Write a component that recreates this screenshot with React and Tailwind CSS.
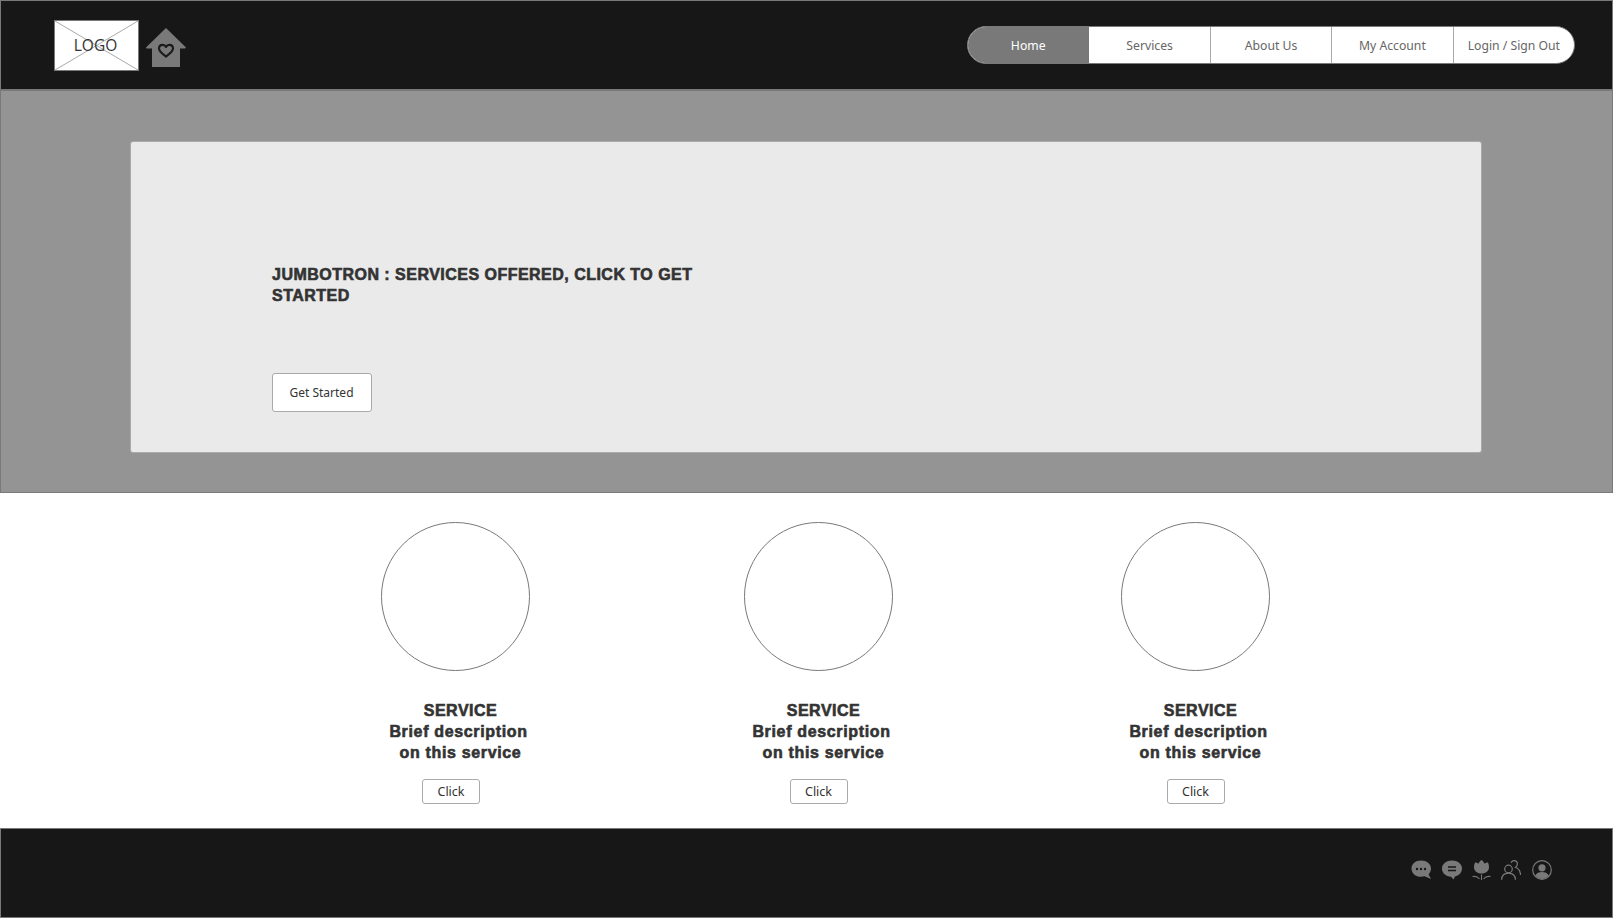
const NAV = ['Home', 'Services', 'About Us', 'My Account', 'Login / Sign Out']

const SERVICES = [
  { offset: 'ml-[381px]', btn: 'mr-[9px]' },
  { offset: 'ml-[214px]', btn: 'mr-0' },
  { offset: 'ml-[228px]', btn: 'mr-0' },
]

function HouseIcon() {
  return (
    <svg width="42" height="41" viewBox="0 0 42 41" className="ml-[6px] mt-[7px]">
      <path d="M21 1 L41 20.5 L40 21.5 L35 21.5 L35 40 L7 40 L7 21.5 L1.5 21.5 L1 20.5 Z" fill="#797979" />
      <path d="M21 29.5 C17 26.5 14 24.5 14 21.5 C14 19 15.8 17.8 17.6 17.8 C19 17.8 20.2 18.5 21 19.8 C21.8 18.5 23 17.8 24.4 17.8 C26.2 17.8 28 19 28 21.5 C28 24.5 25 26.5 21 29.5 Z" fill="none" stroke="#1b1b1b" strokeWidth="2.2" strokeLinejoin="round" />
    </svg>
  )
}

function Logo() {
  return (
    <div className="relative w-[85px] h-[51px] bg-white border border-[#797979] flex items-center justify-center">
      <svg className="absolute inset-0 w-full h-full" viewBox="0 0 83 49" preserveAspectRatio="none">
        <path d="M0 0 L83 49 M83 0 L0 49" stroke="#aaaaaa" strokeWidth="1" />
      </svg>
      <span className="relative text-[15.5px] text-[#333333] font-['Open_Sans',sans-serif] mr-[2px]">LOGO</span>
    </div>
  )
}

function Header() {
  return (
    <header className="h-[91px] bg-[#171717] border border-[#797979] border-b-2 flex items-start justify-between pl-[53px] pr-[37px]">
      <div className="flex items-start pt-[19px]">
        <Logo />
        <HouseIcon />
      </div>
      <nav className="mt-[25px] flex h-[38px] w-[608px] rounded-[19px] overflow-hidden border border-[#797979] bg-white font-['Noto_Sans',sans-serif] text-[12.2px]">
        {NAV.map((item, i) => (
          <div
            key={item}
            className={
              i === 0
                ? 'flex-1 flex items-center justify-center pt-[2px] bg-[#797979] text-white border-r border-[#797979]'
                : 'flex-1 flex items-center justify-center pt-[2px] text-[#666666] whitespace-nowrap border-r border-[#aaaaaa] last:border-r-0'
            }
          >
            {item}
          </div>
        ))}
      </nav>
    </header>
  )
}

function Hero() {
  return (
    <section className="h-[402px] bg-[#949494] border border-[#797979] border-t-0 pl-[129px] pr-[130px] pt-[50px]">
      <div className="h-[312px] bg-[#eaeaea] border border-[#aaaaaa] rounded-[3px] pl-[141px] pt-[122px]">
        <h1 className="w-[450px] text-[16px] leading-[21px] font-bold text-[#333333] tracking-[0.48px] font-['Liberation_Sans',sans-serif] [-webkit-text-stroke:0.6px_#333333]">
          JUMBOTRON : SERVICES OFFERED, CLICK TO GET STARTED
        </h1>
        <button className="mt-[67px] -ml-[0.5px] w-[100px] h-[39px] bg-white border border-[#aaaaaa] rounded-[3px] text-[12px] text-[#333333] font-['Noto_Sans',sans-serif]">
          Get Started
        </button>
      </div>
    </section>
  )
}

function Service({ offset, btn }) {
  return (
    <div className={`${offset} w-[149px] flex flex-col items-center shrink-0`}>
      <div className="w-[149px] h-[149px] rounded-full border border-[#797979] bg-white shrink-0" />
      <p className="mt-[29px] ml-[10px] whitespace-nowrap text-center text-[16px] leading-[21px] font-bold text-[#333333] tracking-[0.65px] font-['Liberation_Sans',sans-serif] [-webkit-text-stroke:0.6px_#333333]">
        <span className="tracking-[0.5px]">SERVICE</span>
        <br />
        <span className="mr-[4px]">Brief description</span>
        <br />
        on this service
      </p>
      <button className={`mt-[16px] ${btn} w-[58px] h-[25px] pt-[1px] bg-white border border-[#aaaaaa] rounded-[3px] text-[12.5px] text-[#333333] font-['Noto_Sans',sans-serif]`}>
        Click
      </button>
    </div>
  )
}

function Services() {
  return (
    <section className="h-[335px] bg-white pt-[29px] flex items-start">
      {SERVICES.map((s, i) => (
        <Service key={i} offset={s.offset} btn={s.btn} />
      ))}
    </section>
  )
}

function FooterIcons() {
  const color = '#797979'
  return (
    <div className="flex items-center gap-[10px] mt-[31px] h-[20px]">
      <svg width="21" height="20" viewBox="0 0 21 20">
        <path d="M10 0.5 C15.5 0.5 20 3.8 20 8.5 C20 11 19 13 17.5 14.2 L20 19 L13.5 16.3 C12.5 16.6 11.2 16.8 10 16.8 C4.5 16.8 0.5 13.2 0.5 8.5 C0.5 3.8 4.5 0.5 10 0.5 Z" fill={color} />
        <circle cx="6" cy="9" r="1.2" fill="#171717" />
        <circle cx="10" cy="9" r="1.2" fill="#171717" />
        <circle cx="14" cy="9" r="1.2" fill="#171717" />
      </svg>
      <svg width="20" height="20" viewBox="0 0 20 20">
        <path d="M10 0.5 C15.5 0.5 20 3.8 20 8.5 C20 13 16.5 15.8 13 16.4 L11.5 19.5 L9 16.8 C4 16.6 0 13.2 0 8.5 C0 3.8 4.5 0.5 10 0.5 Z" fill={color} />
        <path d="M6 7 H14 M6 10.5 H14" stroke="#171717" strokeWidth="1.7" />
      </svg>
      <svg width="19" height="20" viewBox="0 0 19 20">
        <path d="M3 2.5 C4.5 2.5 5.5 3 6.3 3.8 C7 2.2 8 1 9.5 0 C11 1 12 2.2 12.7 3.8 C13.5 3 14.5 2.5 16 2.5 C16.7 4 17 5.5 17 7 C17 11 14 13.5 9.5 13.5 C5 13.5 2 11 2 7 C2 5.5 2.3 4 3 2.5 Z" fill={color} />
        <path d="M9.5 14.5 V20 M0.5 16.5 C3.5 16 6 17 7.5 19 M18.5 16.5 C15.5 16 13 17 11.5 19" fill="none" stroke={color} strokeWidth="1.1" />
      </svg>
      <svg width="20" height="20" viewBox="0 0 20 20" fill="none" stroke={color} strokeWidth="1.2">
        <circle cx="7.5" cy="9" r="3.8" />
        <path d="M0.6 19.8 C0.8 15.5 3.5 13.2 7.5 13.2 C11.5 13.2 14.2 15.5 14.5 19.8" />
        <path d="M10 2.6 C10.8 1.2 11.8 0.6 13 0.6 C15 0.6 16.4 2.2 16.4 4.1 C16.4 5.5 15.6 6.7 14.5 7.3 C17.3 8.3 19.2 10.5 19.6 15" />
      </svg>
      <svg width="20" height="20" viewBox="0 0 20 20" className="ml-px">
        <circle cx="10" cy="10" r="9.3" fill="none" stroke={color} strokeWidth="1.2" />
        <circle cx="10" cy="7.8" r="3.6" fill={color} />
        <path d="M3.2 15.5 C4.5 13 7 12 10 12 C13 12 15.5 13 16.8 15.5 C15 17.8 12.7 19 10 19 C7.3 19 5 17.8 3.2 15.5 Z" fill={color} />
      </svg>
    </div>
  )
}

function Footer() {
  return (
    <footer className="h-[90px] bg-[#171717] border border-[#797979] flex items-start justify-end pr-[60px]">
      <FooterIcons />
    </footer>
  )
}

export default function App() {
  return (
    <div className="w-[1613px] h-[918px] overflow-hidden bg-white">
      <Header />
      <Hero />
      <Services />
      <Footer />
    </div>
  )
}
